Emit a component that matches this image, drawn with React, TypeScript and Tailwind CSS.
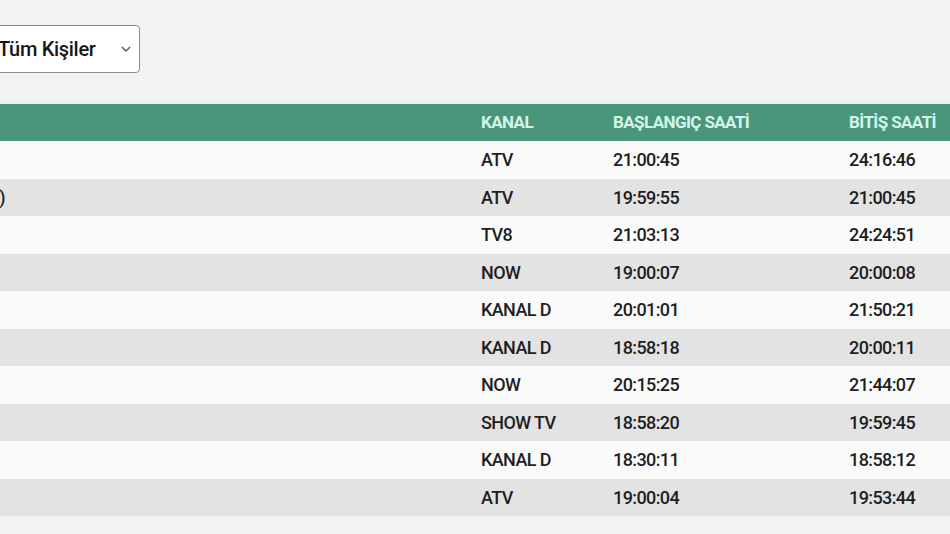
import React from "react";

const rows: { name: string; kanal: string; start: string; end: string }[] = [
  { name: "", kanal: "ATV", start: "21:00:45", end: "24:16:46" },
  { name: "Kuruluş Osman (Özet)", kanal: "ATV", start: "19:59:55", end: "21:00:45" },
  { name: "", kanal: "TV8", start: "21:03:13", end: "24:24:51" },
  { name: "", kanal: "NOW", start: "19:00:07", end: "20:00:08" },
  { name: "", kanal: "KANAL D", start: "20:01:01", end: "21:50:21" },
  { name: "", kanal: "KANAL D", start: "18:58:18", end: "20:00:11" },
  { name: "", kanal: "NOW", start: "20:15:25", end: "21:44:07" },
  { name: "", kanal: "SHOW TV", start: "18:58:20", end: "19:59:45" },
  { name: "", kanal: "KANAL D", start: "18:30:11", end: "18:58:12" },
  { name: "", kanal: "ATV", start: "19:00:04", end: "19:53:44" },
];

export default function App() {
  return (
    <div
      className="w-[950px] h-[534px] overflow-hidden bg-[#f2f2f2] text-[#1e1e1e]"
      style={{ fontFamily: "Roboto, 'Liberation Sans', sans-serif" }}
    >
      <div className="pt-[25px] -ml-[20px]">
        <div className="flex items-center w-[160px] h-[48px] bg-white border border-[#8c8c8c] rounded-[4px] pl-[17px] pr-[6px] justify-between">
          <span className="text-[20px] font-medium tracking-[-0.3px] text-[#161616]">Tüm Kişiler</span>
          <svg width="12" height="8" viewBox="0 0 12 8" className="mr-[1px]">
            <path d="M2 2 L6 6 L10 2" fill="none" stroke="#555" strokeWidth="1.4" />
          </svg>
        </div>
      </div>
      <div className="mt-[29px] -ml-[300px] w-[1300px] border-t-2 border-[#e2f6f0]">
        <div className="flex items-center h-[37px] bg-[#4a967c] text-[#d2f6e9] text-[17px] font-bold tracking-[-0.6px]">
          <div className="w-[781px]"></div>
          <div className="w-[132px]">KANAL</div>
          <div className="w-[236px]">BAŞLANGIÇ SAATİ</div>
          <div>BİTİŞ SAATİ</div>
        </div>
        {rows.map((r, i) => (
          <div
            key={i}
            className={`flex items-center h-[37.5px] text-[18px] font-medium tracking-[-0.6px] ${
              i % 2 === 0 ? "bg-[#fafafa]" : "bg-[#e3e3e3]"
            }`}
          >
            <div className="w-[781px] flex">
              <div className="w-[305px] text-right whitespace-nowrap">{r.name}</div>
            </div>
            <div className="w-[132px]">{r.kanal}</div>
            <div className="w-[236px]">{r.start}</div>
            <div>{r.end}</div>
          </div>
        ))}
      </div>
    </div>
  );
}
